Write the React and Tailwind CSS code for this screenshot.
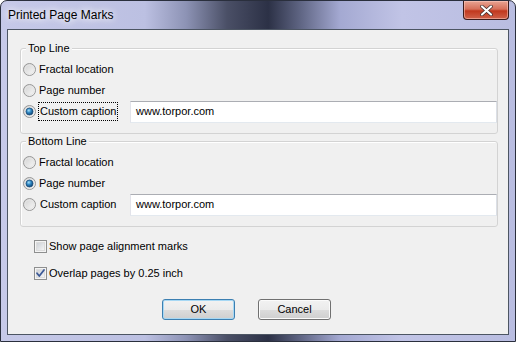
import React from 'react';

const Radio = ({ checked }) => (
  <svg width="13" height="13" viewBox="0 0 13 13" className="shrink-0">
    <defs>
      <linearGradient id="rbg" x1="0" y1="0" x2="1" y2="1">
        <stop offset="0" stopColor="#cfcfcf" />
        <stop offset="1" stopColor="#fbfbfb" />
      </linearGradient>
      <radialGradient id="rdot" cx="0.4" cy="0.35" r="0.7">
        <stop offset="0" stopColor="#a8e0fa" />
        <stop offset="0.45" stopColor="#2f88c4" />
        <stop offset="1" stopColor="#0e3d6b" />
      </radialGradient>
    </defs>
    <circle cx="6.5" cy="6.5" r="6" fill="url(#rbg)" stroke="#979797" />
    <circle cx="6.5" cy="6.5" r="4.5" fill="none" stroke="#e6e6e6" strokeWidth="1" />
    {checked && <circle cx="6.5" cy="6.5" r="3.5" fill="url(#rdot)" stroke="#1d4f7c" strokeWidth="0.8" />}
  </svg>
);

const Check = ({ checked }) => (
  <svg width="13" height="13" viewBox="0 0 13 13" className="shrink-0">
    <defs>
      <linearGradient id="cbg" x1="0" y1="0" x2="1" y2="1">
        <stop offset="0" stopColor="#cbcfd5" />
        <stop offset="1" stopColor="#f7f7f7" />
      </linearGradient>
    </defs>
    <rect x="0.5" y="0.5" width="12" height="12" fill="#f4f4f4" stroke="#8e8f8f" />
    <rect x="2.5" y="2.5" width="8" height="8" fill="url(#cbg)" stroke="#dcdcdc" />
    {checked && (
      <path d="M3 6.2 L5.3 9 L10 3" fill="none" stroke="#3d5a97" strokeWidth="1.8" strokeLinecap="round" strokeLinejoin="round" />
    )}
  </svg>
);

const TextBox = ({ value }) => (
  <div className="flex-1 h-[22px] bg-white border border-[#e3e9ef] border-t-[#abadb3] border-l-[#e2e3ea] border-r-[#dbdfe6] flex items-center pl-[5px] text-[11px] text-black">
    {value}
  </div>
);

const GroupBox = ({ title, selected, focused }) => (
  <div className="relative border border-[#d3d3d3] shadow-[inset_1px_1px_0_#ffffff] rounded-[3px] h-[86px] pt-[10px] pl-[2px]">
    <span className="absolute -top-[8px] left-[5px] bg-[#f0f0f0] px-[2px] text-[11px] leading-[14px]">{title}</span>
    <div className="flex h-[21px] items-center gap-[2px]">
      <Radio checked={selected === 0} />
      <span className="px-[1px]">Fractal location</span>
    </div>
    <div className="flex h-[21px] items-center gap-[2px]">
      <Radio checked={selected === 1} />
      <span className="px-[1px]">Page number</span>
    </div>
    <div className="flex h-[21px] items-center">
      <div className="flex w-[107px] items-center gap-[2px]">
        <Radio checked={selected === 2} />
        <span className={`px-[1px] leading-[17px] border border-dotted ${focused ? 'border-black' : 'border-transparent'}`}>Custom caption</span>
      </div>
      <TextBox value="www.torpor.com" />
    </div>
  </div>
);

const Button = ({ children, primary }) => (
  <button
    className={`w-[73px] h-[21px] rounded-[3px] border text-[11px] text-black bg-[linear-gradient(#f2f2f2_0%,#ebebeb_50%,#dddddd_51%,#cfcfcf_100%)] ${primary ? 'border-[#3c7fb1] shadow-[inset_0_0_0_1px_#a7d8f4]' : 'border-[#707070] shadow-[inset_0_0_0_1px_#fbfbfb]'}`}
  >
    {children}
  </button>
);

export default function App() {
  return (
    <div className="w-[516px] h-[342px] overflow-hidden rounded-t-[7px] border border-[#2a2f3d] bg-[linear-gradient(90deg,#c6c9e8_0%,#bcc0e2_28%,#8d93b5_36%,#4a4f66_44%,#2c3146_52%,#5d6381_58%,#a4a9d2_66%,#c1c4e6_78%,#b9bde1_100%)] font-['Liberation_Sans',Arial,sans-serif] text-[11px] text-black">
      <div className="flex h-[28px] items-start justify-between">
        <span className="pl-[7px] pt-[6px] text-[12px] leading-[16px] [text-shadow:0_0_6px_#ffffff,0_0_10px_#ffffff]">Printed Page Marks</span>
        <div className="mr-[6px] w-[46px] h-[19px] rounded-b-[4px] border border-t-0 border-[#3a1c1c] bg-[linear-gradient(#e8a493_0%,#d6705a_45%,#c1381e_55%,#d0624a_100%)] flex items-center justify-center shadow-[inset_0_0_0_1px_rgba(255,210,200,0.5)]">
          <svg width="13" height="11" viewBox="0 0 13 11">
            <path d="M2 1.5 L11 9.5 M11 1.5 L2 9.5" stroke="#3a2a2a" strokeWidth="3.6" strokeLinecap="round" />
            <path d="M2 1.5 L11 9.5 M11 1.5 L2 9.5" stroke="#ffffff" strokeWidth="2.2" strokeLinecap="round" />
          </svg>
        </div>
      </div>
      <div className="mx-[6px] h-[306px] border border-[#4c5563] bg-[#f0f0f0] pt-[18px]">
        <div className="ml-[12px] mr-[10px] flex flex-col gap-[7px]">
          <GroupBox title="Top Line" selected={2} focused />
          <GroupBox title="Bottom Line" selected={1} />
        </div>
        <div className="ml-[26px] mt-[9px] flex flex-col gap-[6px]">
          <div className="flex h-[21px] items-center gap-[2px]">
            <Check />
            <span>Show page alignment marks</span>
          </div>
          <div className="flex h-[21px] items-center gap-[2px]">
            <Check checked />
            <span>Overlap pages by 0.25 inch</span>
          </div>
        </div>
        <div className="mt-[15px] pl-[154px] flex gap-[23px]">
          <Button primary>OK</Button>
          <Button>Cancel</Button>
        </div>
      </div>
    </div>
  );
}
